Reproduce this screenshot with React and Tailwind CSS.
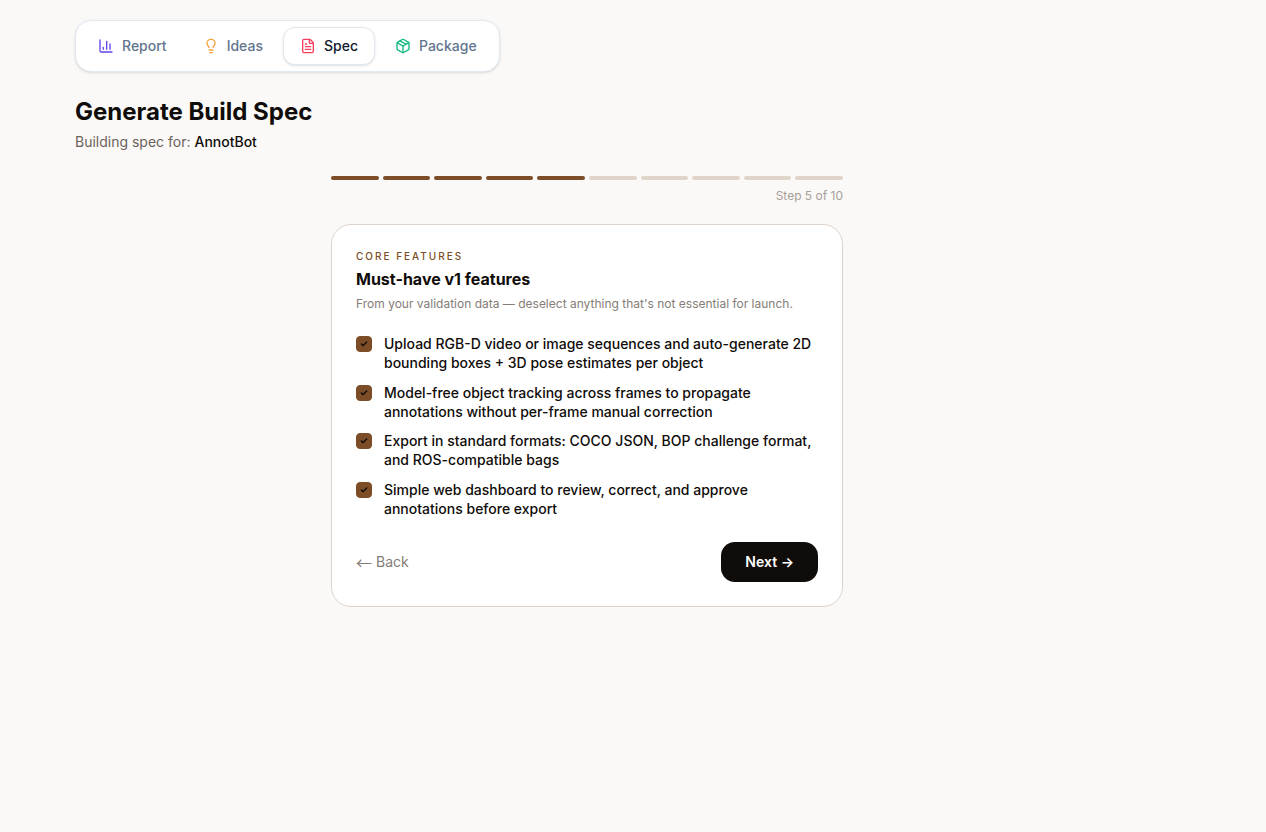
import { useState } from 'react'
import { ChartColumn, Check, FileText, Lightbulb, Package } from 'lucide-react'
import { clsx } from 'clsx'

const TABS = [
  { name: 'Report', Icon: ChartColumn, color: 'text-[#6246ea]' },
  { name: 'Ideas', Icon: Lightbulb, color: 'text-[#f9a23b]' },
  { name: 'Spec', Icon: FileText, color: 'text-[#f43f5e]' },
  { name: 'Package', Icon: Package, color: 'text-[#10b981]' }
]

const FEATURES = [
  'Upload RGB-D video or image sequences and auto-generate 2D bounding boxes + 3D pose estimates per object',
  'Model-free object tracking across frames to propagate annotations without per-frame manual correction',
  'Export in standard formats: COCO JSON, BOP challenge format, and ROS-compatible bags',
  'Simple web dashboard to review, correct, and approve annotations before export'
]

export default function App() {
  const [tab, setTab] = useState('Spec')
  const [step, setStep] = useState(5)

  return (
    <div className="min-h-screen bg-[#faf9f7] pt-5 pr-[92px] pb-10 font-[Inter,sans-serif] text-[#0f0c09]">
      <main className="mx-auto w-full max-w-5xl">
        <TabBar active={tab} onChange={setTab} />
        <h1 className="mt-6 text-2xl font-bold">Generate Build Spec</h1>
        <p className="mt-1 text-sm text-[#6b625b]">
          Building spec for: <span className="font-medium text-[#0f0c09]">AnnotBot</span>
        </p>
        <div className="mx-auto mt-6 max-w-lg">
          <Progress step={step} total={10} />
          <FeatureCard
            onBack={() => setStep(Math.max(1, step - 1))}
            onNext={() => setStep(Math.min(10, step + 1))}
          />
        </div>
      </main>
    </div>
  )
}

function TabBar({ active, onChange }) {
  return (
    <nav className="flex w-fit gap-1 rounded-2xl border border-slate-200 bg-white p-1.5 shadow-sm">
      {TABS.map(({ name, Icon, color }) => (
        <button
          key={name}
          type="button"
          onClick={() => onChange(name)}
          className={clsx(
            'flex items-center gap-2 rounded-xl px-4 py-2 text-sm font-medium',
            name === active
              ? 'border border-slate-200 bg-white text-slate-900 shadow-sm'
              : 'text-slate-500'
          )}
        >
          <Icon size={16} className={color} />
          {name}
        </button>
      ))}
    </nav>
  )
}

function Progress({ step, total }) {
  return (
    <div className="mb-5">
      <div className="flex gap-1">
        {Array.from({ length: total }, (_, i) => (
          <div
            key={i}
            className={clsx('h-1 flex-1 rounded-full', i < step ? 'bg-[#7c4d26]' : 'bg-[#dfd5ca]')}
          />
        ))}
      </div>
      <p className="mt-2 text-right text-xs text-[#a8a09a]">
        Step {step} of {total}
      </p>
    </div>
  )
}

function FeatureCard({ onBack, onNext }) {
  return (
    <section className="rounded-[20px] border border-[#ddd3cd] bg-white p-6">
      <p className="text-[10px] leading-[15px] font-medium tracking-[2px] text-[#7c4d26] uppercase">
        Core features
      </p>
      <h2 className="mt-1 text-base leading-snug font-bold">Must-have v1 features</h2>
      <p className="mt-1 text-xs leading-5 text-[#857d77]">
        From your validation data — deselect anything that's not essential for launch.
      </p>
      <ul className="mt-5 space-y-2.5">
        {FEATURES.map((feature) => (
          <li key={feature}>
            <Feature text={feature} />
          </li>
        ))}
      </ul>
      <div className="mt-6 flex items-center justify-between">
        <button type="button" onClick={onBack} className="flex items-center gap-1 text-sm text-[#857d77]">
          <span className="font-['Noto_Sans_CJK_JP',sans-serif] text-base leading-5">←</span>
          Back
        </button>
        <button
          type="button"
          onClick={onNext}
          className="rounded-[14px] bg-[#0f0c09] px-6 py-2.5 text-sm font-semibold text-white"
        >
          Next →
        </button>
      </div>
    </section>
  )
}

function Feature({ text }) {
  return (
    <label className="flex cursor-pointer items-start gap-3 text-sm leading-snug font-medium">
      <span className="mt-0.5 grid size-4 shrink-0 place-items-center">
        <input
          type="checkbox"
          defaultChecked
          className="peer col-start-1 row-start-1 size-4 appearance-none rounded border border-[#dfd5ca] checked:border-[#7c4d26] checked:bg-[#7c4d26]"
        />
        <Check
          size={8}
          strokeWidth={4}
          className="pointer-events-none invisible z-10 col-start-1 row-start-1 peer-checked:visible"
        />
      </span>
      {text}
    </label>
  )
}
